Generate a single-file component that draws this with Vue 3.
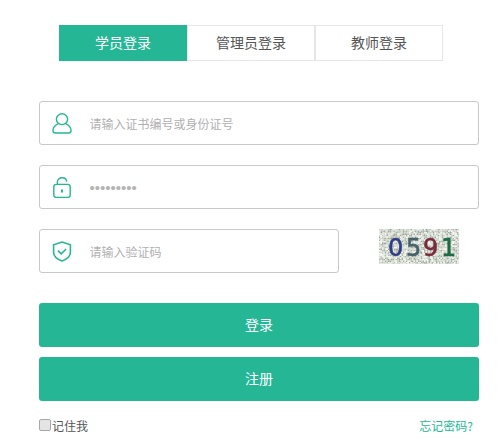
<script setup>
const tabs = [
  { label: '学员登录', active: true },
  { label: '管理员登录', active: false },
  { label: '教师登录', active: false }
]

const palette = ['#c9cfc4', '#b4bcae', '#e4e8e0', '#a9b3a6', '#f0f2ec', '#c3d0c6', '#d8d8cc', '#f6f6f2', '#9fa99e', '#d2dcd6']
const pick = (x, y) => {
  const v = Math.sin(x * 12.9898 + y * 78.233) * 43758.5453
  return Math.floor((v - Math.floor(v)) * palette.length)
}
const noise = []
for (let y = 0; y < 35; y += 1.5) {
  for (let x = 0; x < 80; x += 1.5) {
    noise.push({ x, y, fill: palette[pick(x, y)] })
  }
}
const digits = [
  { ch: '0', x: 9, fill: '#2f3d86' },
  { ch: '5', x: 27, fill: '#46626a' },
  { ch: '9', x: 44, fill: '#7a2a3a' },
  { ch: '1', x: 62, fill: '#1f6a48' }
]
</script>

<template>
  <div class="page">
    <div class="tabs">
      <div v-for="t in tabs" :key="t.label" class="tab" :class="{ active: t.active }">{{ t.label }}</div>
    </div>

    <div class="fields">
      <label class="field">
        <svg class="icon" width="20" height="21" viewBox="0 0 20 21" fill="none" stroke="#25b795" stroke-width="1.4">
          <ellipse cx="10" cy="6.2" rx="5.6" ry="5.4" />
          <path d="M6.4 10.6C3.2 12 1 14.8 .9 17.6c0 1.5.9 2.4 2.4 2.4h13.4c1.500 0 2.400-.9 2.400-2.400-.1-2.800-2.300-5.600-5.500-7" />
        </svg>
        <input class="input" type="text" placeholder="请输入证书编号或身份证号" />
      </label>

      <label class="field">
        <svg class="icon" width="20" height="21" viewBox="0 0 20 21" fill="none" stroke="#25b795" stroke-width="1.4">
          <rect x="1.800" y="7.400" width="16.400" height="13" rx="2.400" />
          <path d="M5.400 7.200V5C5.400 2.600 7.400 .8 10 .8s4.500 1.600 4.600 3.800" />
          <path d="M10 12.600v2.800" stroke-width="2" />
        </svg>
        <input class="input secret" type="password" value="123456789" />
      </label>

      <div class="captcha-row">
        <label class="field code">
          <svg class="icon" width="20" height="21" viewBox="0 0 20 21" fill="none" stroke="#25b795" stroke-width="1.600">
            <path d="M10 1l8.400 2.800v7.400c0 4-3.700 7-8.400 8.800-4.700-1.800-8.400-4.800-8.400-8.800V3.800z" />
            <path d="M6 9.600l3.200 3.200 5-4.800" />
          </svg>
          <input class="input" type="text" placeholder="请输入验证码" />
        </label>
        <svg class="captcha" width="80" height="35" viewBox="0 0 80 35" role="img" aria-label="验证码">
          <rect v-for="(n, i) in noise" :key="i" :x="n.x" :y="n.y" width="1.5" height="1.5" :fill="n.fill" />
          <text v-for="d in digits" :key="d.ch" class="digit" :x="d.x" y="27" :fill="d.fill" :stroke="d.fill">{{ d.ch }}</text>
        </svg>
      </div>
    </div>

    <button class="btn login" type="button">登录</button>
    <button class="btn register" type="button">注册</button>

    <div class="foot">
      <label class="remember"><span class="check"></span>记住我</label>
      <a class="forgot">忘记密码?</a>
    </div>
  </div>
</template>

<style>
html, body { margin: 0; background: #fff; overflow: hidden; }
</style>

<style scoped>
.page {
  width: 504px;
  height: 441px;
  box-sizing: border-box;
  padding: 25px 25px 0 39px;
  font-family: "Noto Sans CJK SC", "Liberation Sans", sans-serif;
  overflow: hidden;
}
.tabs {
  display: flex;
  height: 36px;
  margin: 0 0 40px 20px;
}
.tab {
  width: 128px;
  box-sizing: border-box;
  border: 1px solid #e6e6e6;
  font-size: 14px;
  line-height: 32px;
  text-align: center;
  color: #555;
}
.tab.active {
  background: #25b795;
  border-color: #25b795;
  color: #fff;
}
.fields {
  display: flex;
  flex-direction: column;
  gap: 20px;
  margin-bottom: 30px;
}
.field {
  display: flex;
  align-items: center;
  width: 440px;
  height: 44px;
  box-sizing: border-box;
  border: 1px solid #c8c8c8;
  border-radius: 3px;
  background: #fff;
  padding-left: 12px;
}
.field.code { width: 300px; }
.icon { flex: none; margin-right: 18px; }
.input {
  flex: 1;
  min-width: 0;
  border: 0;
  outline: 0;
  padding: 0;
  margin-left: -0.5px;
  background: transparent;
  font-family: inherit;
  font-size: 12px;
  color: #a9a9a9;
}
.input::placeholder { color: #b0b0b0; opacity: 1; }
.secret {
  font-family: "Liberation Sans", sans-serif;
  font-size: 15px;
  color: #b4b4b4;
}
.captcha-row {
  display: flex;
  align-items: flex-start;
  gap: 40px;
}
.captcha { display: block; flex: none; filter: blur(0.35px); }
.digit {
  font-family: "DejaVu Sans", sans-serif;
  font-size: 24px;
  font-weight: 400;
  stroke-width: 0.6;
}
.btn {
  display: block;
  width: 440px;
  height: 44px;
  border: 0;
  border-radius: 3px;
  padding: 0 0 2px;
  background: #25b795;
  color: #fff;
  font-family: inherit;
  font-size: 14px;
}
.register { margin-top: 10px; }
.foot {
  display: flex;
  justify-content: space-between;
  width: 434px;
  margin-top: 16px;
  font-size: 12px;
  line-height: 18px;
}
.remember { display: flex; align-items: center; color: #555; }
.check {
  width: 12px;
  height: 12px;
  margin: -3px 1px 0 0;
  box-sizing: border-box;
  border: 1px solid #a8a8a8;
  border-radius: 2px;
  background: #e4e4e4;
}
.forgot { color: #25b795; }
</style>
